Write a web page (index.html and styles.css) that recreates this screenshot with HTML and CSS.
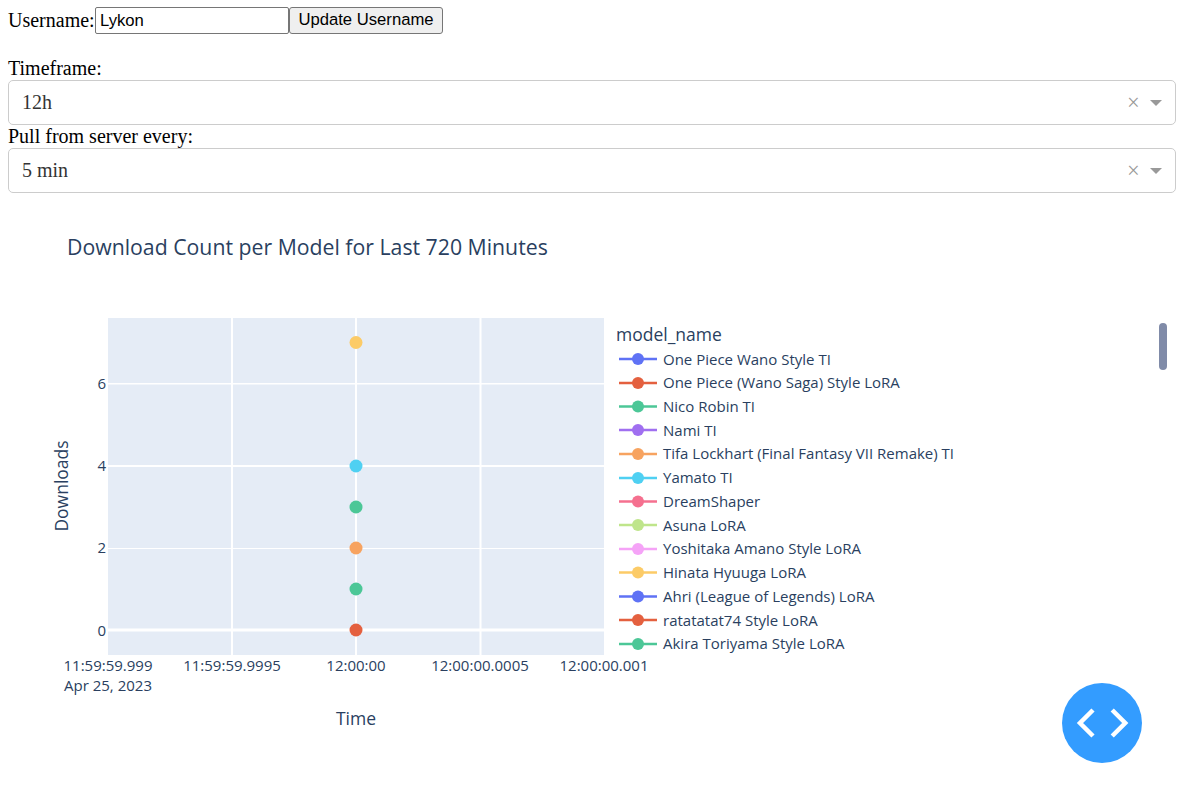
FILE: index.html
```html
<!DOCTYPE html>
<html lang="en">
<head>
<meta charset="utf-8">
<title>Download Count per Model</title>
<link rel="stylesheet" href="styles.css">
</head>
<body>
<form class="user-row">
  <label class="user-label" for="username">Username:</label>
  <input class="user-input" id="username" type="text" value="Lykon">
  <button class="user-button" type="button">Update Username</button>
</form>
<div class="field-label field-label-first">Timeframe:</div>
<div class="dropdown">
  <span class="dropdown-value">12h</span>
  <span class="dropdown-clear">×</span>
  <span class="dropdown-arrow"></span>
</div>
<div class="field-label">Pull from server every:</div>
<div class="dropdown">
  <span class="dropdown-value">5 min</span>
  <span class="dropdown-clear">×</span>
  <span class="dropdown-arrow"></span>
</div>
<svg class="chart" viewBox="8 193 1167 570" width="1167" height="570" xmlns="http://www.w3.org/2000/svg">
  <text class="chart-title" x="67" y="255">Download Count per Model for Last 720 Minutes</text>
  <rect class="plot-bg" x="108" y="318" width="496" height="337"/>
  <g class="grid">
    <line x1="232" y1="318" x2="232" y2="655"/>
    <line x1="356" y1="318" x2="356" y2="655"/>
    <line x1="480.5" y1="318" x2="480.5" y2="655"/>
    <line class="grid-mid" x1="108" y1="383.7" x2="604" y2="383.7"/>
    <line x1="108" y1="466" x2="604" y2="466"/>
    <line class="grid-thin" x1="108" y1="548.5" x2="604" y2="548.5"/>
  </g>
  <line class="zero-line" x1="108" y1="630" x2="604" y2="630"/>
  <g class="tick tick-y">
    <text x="106" y="388.5">6</text>
    <text x="106" y="470.5">4</text>
    <text x="106" y="552.5">2</text>
    <text x="106" y="635.5">0</text>
  </g>
  <g class="tick tick-x">
    <text x="108" y="671">11:59:59.999</text>
    <text x="108" y="691">Apr 25, 2023</text>
    <text x="232" y="671">11:59:59.9995</text>
    <text x="356" y="671">12:00:00</text>
    <text x="480" y="671">12:00:00.0005</text>
    <text x="604" y="671">12:00:00.001</text>
  </g>
  <text class="axis-title axis-x" x="356" y="725">Time</text>
  <text class="axis-title axis-y" transform="translate(68 486) rotate(-90)">Downloads</text>
  <g class="points">
    <circle class="c-yellow" cx="356" cy="342.5" r="6.5"/>
    <circle class="c-cyan" cx="356" cy="466" r="6.5"/>
    <circle class="c-green" cx="356" cy="507" r="6.5"/>
    <circle class="c-orange" cx="356" cy="548" r="6.5"/>
    <circle class="c-green" cx="356" cy="589" r="6.5"/>
    <circle class="c-red" cx="356" cy="630" r="6.5"/>
  </g>
  <text class="legend-title" x="616" y="341">model_name</text>
  <g class="legend">
    <g class="c-blue"><line x1="619" y1="359" x2="657" y2="359"/><circle cx="638" cy="359" r="6"/></g>
    <text x="663" y="365">One Piece Wano Style TI</text>
    <g class="c-red"><line x1="619" y1="383" x2="657" y2="383"/><circle cx="638" cy="383" r="6"/></g>
    <text x="663" y="388">One Piece (Wano Saga) Style LoRA</text>
    <g class="c-green"><line x1="619" y1="406.5" x2="657" y2="406.5"/><circle cx="638" cy="406.5" r="6"/></g>
    <text x="663" y="412">Nico Robin TI</text>
    <g class="c-purple"><line x1="619" y1="430" x2="657" y2="430"/><circle cx="638" cy="430" r="6"/></g>
    <text x="663" y="436">Nami TI</text>
    <g class="c-orange"><line x1="619" y1="454" x2="657" y2="454"/><circle cx="638" cy="454" r="6"/></g>
    <text x="663" y="459">Tifa Lockhart (Final Fantasy VII Remake) TI</text>
    <g class="c-cyan"><line x1="619" y1="478" x2="657" y2="478"/><circle cx="638" cy="478" r="6"/></g>
    <text x="663" y="483">Yamato TI</text>
    <g class="c-pink"><line x1="619" y1="501.5" x2="657" y2="501.5"/><circle cx="638" cy="501.5" r="6"/></g>
    <text x="663" y="507">DreamShaper</text>
    <g class="c-lime"><line x1="619" y1="525" x2="657" y2="525"/><circle cx="638" cy="525" r="6"/></g>
    <text x="663" y="531">Asuna LoRA</text>
    <g class="c-magenta"><line x1="619" y1="549" x2="657" y2="549"/><circle cx="638" cy="549" r="6"/></g>
    <text x="663" y="554">Yoshitaka Amano Style LoRA</text>
    <g class="c-yellow"><line x1="619" y1="572.5" x2="657" y2="572.5"/><circle cx="638" cy="572.5" r="6"/></g>
    <text x="663" y="578">Hinata Hyuuga LoRA</text>
    <g class="c-blue"><line x1="619" y1="596.5" x2="657" y2="596.5"/><circle cx="638" cy="596.5" r="6"/></g>
    <text x="663" y="602">Ahri (League of Legends) LoRA</text>
    <g class="c-red"><line x1="619" y1="620" x2="657" y2="620"/><circle cx="638" cy="620" r="6"/></g>
    <text x="663" y="626">ratatatat74 Style LoRA</text>
    <g class="c-green"><line x1="619" y1="644" x2="657" y2="644"/><circle cx="638" cy="644" r="6"/></g>
    <text x="663" y="649">Akira Toriyama Style LoRA</text>
  </g>
  <rect class="legend-scroll" x="1159" y="323" width="8" height="47" rx="4"/>
</svg>
<button class="fab" type="button" aria-label="Toggle code view">
  <svg class="fab-icon" viewBox="0 0 80 80" width="80" height="80" xmlns="http://www.w3.org/2000/svg">
    <path d="M31 27 L18 40 L31 53"/>
    <path d="M50.2 27 L63.2 40 L50.2 53"/>
  </svg>
</button>
</body>
</html>
```
FILE: styles.css
```css
html, body {
  height: 100%;
  overflow: hidden;
}
body {
  margin: 0;
  padding: 7px 7px 0 8px;
  box-sizing: border-box;
  background: #fff;
  color: #000;
  font-family: "Liberation Serif", "Times New Roman", serif;
  font-size: 20px;
  line-height: 23px;
}
.user-row {
  display: flex;
  align-items: center;
  height: 27px;
  margin: 0;
}
.user-label {
  width: 87px;
  flex: none;
}
.user-input {
  box-sizing: border-box;
  width: 194px;
  height: 27px;
  margin: 0;
  padding: 0 4px;
  border: 1px solid #767676;
  border-radius: 2px;
  background: #fff;
  color: #000;
  font-family: "Liberation Sans", Arial, sans-serif;
  font-size: 16.67px;
}
.user-button {
  box-sizing: border-box;
  width: 154px;
  height: 27px;
  margin: 0;
  padding: 0 0 2px;
  border: 1px solid #767676;
  border-radius: 3px;
  background: #efefef;
  color: #000;
  font-family: "Liberation Sans", Arial, sans-serif;
  font-size: 16.67px;
}
.field-label {
  height: 23px;
}
.field-label-first {
  margin-top: 23px;
}
.dropdown {
  box-sizing: border-box;
  display: flex;
  align-items: center;
  height: 45px;
  padding: 0 13px 0 13px;
  border: 1px solid #ccc;
  border-radius: 5px;
  background: #fff;
  color: #333;
}
.dropdown-value {
  flex: 1;
}
.dropdown-clear {
  width: 23px;
  color: #999;
  font-size: 22.5px;
  text-align: left;
}
.dropdown-arrow {
  width: 0;
  height: 0;
  border-style: solid;
  border-width: 6px 6px 0;
  border-color: #999 transparent transparent;
}
.chart {
  display: block;
  font-family: "Open Sans", sans-serif;
}
.chart text {
  fill: #2a3f5f;
}
.chart-title {
  font-size: 21.25px;
}
.plot-bg {
  fill: #e5ecf6;
}
.grid line {
  stroke: #fff;
  stroke-width: 2;
}
.grid .grid-mid {
  stroke-width: 1.4;
}
.grid .grid-thin {
  stroke-width: 1;
}
.zero-line {
  stroke: #fff;
  stroke-width: 3;
}
.tick {
  font-size: 15px;
}
.tick-y {
  text-anchor: end;
}
.tick-x {
  text-anchor: middle;
}
.axis-title {
  font-size: 17.5px;
  text-anchor: middle;
}
.legend-title {
  font-size: 17.5px;
}
.legend {
  font-size: 15px;
}
.legend line {
  stroke-width: 2.5;
}
.legend-scroll {
  fill: #808ba8;
}
.c-blue { fill: #5f72f5; stroke: #5f72f5; }
.c-red { fill: #e4603f; stroke: #e4603f; }
.c-green { fill: #4cc797; stroke: #4cc797; }
.c-purple { fill: #a06ff0; stroke: #a06ff0; }
.c-orange { fill: #f7a360; stroke: #f7a360; }
.c-cyan { fill: #4fd0f2; stroke: #4fd0f2; }
.c-pink { fill: #f5708f; stroke: #f5708f; }
.c-lime { fill: #bfe58b; stroke: #bfe58b; }
.c-magenta { fill: #f5a3f7; stroke: #f5a3f7; }
.c-yellow { fill: #fccb67; stroke: #fccb67; }
circle {
  stroke-width: 0;
}
.fab {
  position: fixed;
  right: 41px;
  bottom: 42px;
  width: 80px;
  height: 80px;
  padding: 0;
  border: 0;
  border-radius: 50%;
  background: #339cff;
}
.fab-icon {
  display: block;
  fill: none;
  stroke: #fff;
  stroke-width: 4.5;
}
```
